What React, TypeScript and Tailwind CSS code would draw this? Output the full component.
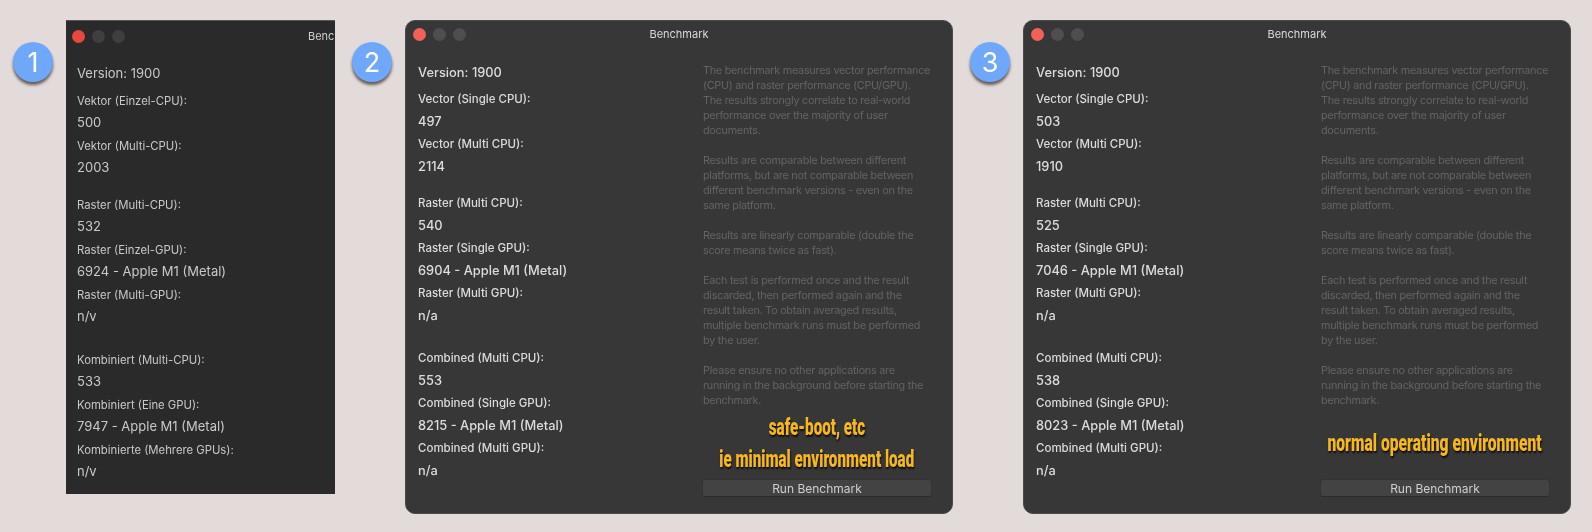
import React from "react";

type Row = [string, string];

const description: string[][] = [
  [
    "The benchmark measures vector performance",
    "(CPU) and raster performance (CPU/GPU).",
    "The results strongly correlate to real-world",
    "performance over the majority of user",
    "documents.",
  ],
  [
    "Results are comparable between different",
    "platforms, but are not comparable between",
    "different benchmark versions - even on the",
    "same platform.",
  ],
  ["Results are linearly comparable (double the", "score means twice as fast)."],
  [
    "Each test is performed once and the result",
    "discarded, then performed again and the",
    "result taken. To obtain averaged results,",
    "multiple benchmark runs must be performed",
    "by the user.",
  ],
  [
    "Please ensure no other applications are",
    "running in the background before starting the",
    "benchmark.",
  ],
];

function Badge({ n, className }: { n: string; className: string }) {
  return (
    <div
      className={`mt-[22px] flex h-10 w-10 shrink-0 items-center justify-center rounded-full bg-[#6fa8fb] text-[27px] leading-none text-white shadow-[0_3px_3px_rgba(60,50,45,0.75)] ${className}`}
    >
      {n}
    </div>
  );
}

function Lights({ dark }: { dark?: boolean }) {
  return (
    <div className="flex items-center gap-[7px]">
      <span className={`h-[13px] w-[13px] rounded-full ${dark ? "bg-[#e5483f]" : "bg-[#f2605a]"}`} />
      <span className={`h-[13px] w-[13px] rounded-full ${dark ? "bg-[#3f3f3f]" : "bg-[#4e4e4e]"}`} />
      <span className={`h-[13px] w-[13px] rounded-full ${dark ? "bg-[#3f3f3f]" : "bg-[#4e4e4e]"}`} />
    </div>
  );
}

function Results({ groups, dark }: { groups: Row[][]; dark?: boolean }) {
  const valueSize = dark ? "text-[13px]" : "text-[12.85px]";
  return (
    <div className={`flex flex-col ${dark ? "text-[#c9c9c9]" : "font-medium text-[#dcdcdc]"}`}>
      <div className={`flex h-[22px] items-center ${valueSize}`}>Version: 1900</div>
      <div className="mt-[4px] flex flex-col">
        {groups.map((g, i) => (
          <div key={i} className={i === 0 ? "" : i === 1 ? "mt-[14px]" : "mt-[20px]"}>
            {g.map(([label, value]) => (
              <div key={label}>
                <div className={`flex h-[22px] items-center ${dark ? "pt-[2px] text-[11.3px]" : "pt-[1px] text-[11.5px]"}`}>
                  {label}
                </div>
                <div className={`flex h-[23px] items-center ${valueSize}`}>{value}</div>
              </div>
            ))}
          </div>
        ))}
      </div>
    </div>
  );
}

function Note({ lines, scale }: { lines: string[]; scale: string }) {
  return (
    <div className="flex flex-1 flex-col items-center justify-center gap-[6px]">
      {lines.map((l) => (
        <div
          key={l}
          className={`h-[26px] whitespace-nowrap font-['Roboto',sans-serif] text-[23px] font-black leading-[26px] text-[#f6b81c] [text-shadow:1px_2px_2px_rgba(0,0,0,0.75)] ${scale}`}
        >
          {l}
        </div>
      ))}
    </div>
  );
}

function Description() {
  return (
    <div className="flex flex-col gap-[15px] pl-[1px] text-[10.8px] leading-[15px] tracking-[-0.25px] text-[#646464]">
      {description.map((p, i) => (
        <div key={i}>
          {p.map((l) => (
            <div key={l} className="whitespace-nowrap">
              {l}
            </div>
          ))}
        </div>
      ))}
    </div>
  );
}

function Window({
  groups,
  notes,
  scale,
  className,
}: {
  groups: Row[][];
  notes: string[];
  scale: string;
  className: string;
}) {
  return (
    <div
      className={`flex h-[494px] w-[548px] shrink-0 flex-col rounded-[10px] border border-[#4a4a4a] bg-[#373737] ${className}`}
    >
      <div className="relative flex h-[27px] shrink-0 items-center pl-[7px]">
        <Lights />
        <div className="absolute inset-x-0 top-[6px] text-center text-[11px] leading-[15px] text-[#d9d9d9]">
          Benchmark
        </div>
      </div>
      <div className="flex min-h-0 flex-1">
        <div className="flex-1 pl-[12px] pt-[14px]">
          <Results groups={groups} />
        </div>
        <div className="mr-[20px] flex w-[230px] flex-col pb-[16px] pt-[15px]">
          <Description />
          <Note lines={notes} scale={scale} />
          <button className="h-[18px] w-full rounded-[3px] border border-[#333333] border-b-[#2b2b2b] bg-[#434343] text-[12px] leading-[15px] text-[#cfcfcf]">
            Run Benchmark
          </button>
        </div>
      </div>
    </div>
  );
}

export default function App() {
  return (
    <div className="flex h-[532px] w-[1592px] items-start overflow-hidden bg-[#e2dbd9] pl-[13px] pt-[20px] font-['Inter',sans-serif] blur-[0.35px]">
      <Badge n="1" className="" />
      <div className="ml-[13px] h-[474px] w-[269px] shrink-0 overflow-hidden border-t border-[#555] bg-[#2a2a2a]">
        <div className="flex h-[30px] items-center justify-between pl-[6px] text-[11px] text-[#cfcfcf]">
          <div className="mt-[1px]">
            <Lights dark />
          </div>
          <span className="w-[27px] overflow-hidden">Benchmark</span>
        </div>
        <div className="pl-[11px] pt-[12px]">
          <Results
            dark
            groups={[
              [
                ["Vektor (Einzel-CPU):", "500"],
                ["Vektor (Multi-CPU):", "2003"],
              ],
              [
                ["Raster (Multi-CPU):", "532"],
                ["Raster (Einzel-GPU):", "6924 - Apple M1 (Metal)"],
                ["Raster (Multi-GPU):", "n/v"],
              ],
              [
                ["Kombiniert (Multi-CPU):", "533"],
                ["Kombiniert (Eine GPU):", "7947 - Apple M1 (Metal)"],
                ["Kombinierte (Mehrere GPUs):", "n/v"],
              ],
            ]}
          />
        </div>
      </div>
      <Badge n="2" className="ml-[17px]" />
      <Window
        className="ml-[13px]"
        scale="scale-x-[0.66]"
        notes={["safe-boot, etc", "ie minimal environment load"]}
        groups={[
          [
            ["Vector (Single CPU):", "497"],
            ["Vector (Multi CPU):", "2114"],
          ],
          [
            ["Raster (Multi CPU):", "540"],
            ["Raster (Single GPU):", "6904 - Apple M1 (Metal)"],
            ["Raster (Multi GPU):", "n/a"],
          ],
          [
            ["Combined (Multi CPU):", "553"],
            ["Combined (Single GPU):", "8215 - Apple M1 (Metal)"],
            ["Combined (Multi GPU):", "n/a"],
          ],
        ]}
      />
      <Badge n="3" className="ml-[17px]" />
      <Window
        className="ml-[13px]"
        scale="scale-x-[0.68]"
        notes={["normal operating environment"]}
        groups={[
          [
            ["Vector (Single CPU):", "503"],
            ["Vector (Multi CPU):", "1910"],
          ],
          [
            ["Raster (Multi CPU):", "525"],
            ["Raster (Single GPU):", "7046 - Apple M1 (Metal)"],
            ["Raster (Multi GPU):", "n/a"],
          ],
          [
            ["Combined (Multi CPU):", "538"],
            ["Combined (Single GPU):", "8023 - Apple M1 (Metal)"],
            ["Combined (Multi GPU):", "n/a"],
          ],
        ]}
      />
    </div>
  );
}
